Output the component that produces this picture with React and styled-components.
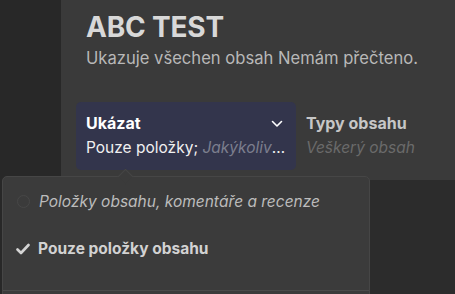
import React from 'react'
import styled, { createGlobalStyle } from 'styled-components'

const Global = createGlobalStyle`
  html, body {
    margin: 0;
    padding: 0;
    background: #2c2c2c;
    font-family: Inter, "Noto Sans", sans-serif;
  }
`;

function App() {
  return (
    <Page>
      <Global />
      <Sidebar />
      <Main>
        <Header>
          <Title>ABC TEST</Title>
          <Subtitle>Ukazuje všechen obsah Nemám přečteno.</Subtitle>
          <Filters>
            <SelectBox>
              <LabelRow>
                <Label>Ukázat</Label>
                <svg width="12" height="8" viewBox="0 0 12 8" fill="none">
                  <path d="M1.5 1.5 6 6l4.5-4.5" stroke="#fff" strokeWidth="1.6" strokeLinecap="round" strokeLinejoin="round" />
                </svg>
              </LabelRow>
              <Value>
                Pouze položky; <Muted>Jakýkoliv obsah</Muted>
              </Value>
            </SelectBox>
            <Filter>
              <Label dim>Typy obsahu</Label>
              <Value><Muted faint>Veškerý obsah</Muted></Value>
            </Filter>
          </Filters>
        </Header>
      </Main>

      <Menu>
        <MenuItem>
          <Radio />
          <ItemText italic>Položky obsahu, komentáře a recenze</ItemText>
        </MenuItem>
        <MenuItem>
          <svg width="14" height="12" viewBox="0 0 14 12">
            <path d="M1.5 6.5 5 10l7.5-8" stroke="#d4d4d4" strokeWidth="2.6" fill="none" strokeLinecap="round" strokeLinejoin="round" />
          </svg>
          <ItemText bold>Pouze položky obsahu</ItemText>
        </MenuItem>
        <Divider />
      </Menu>
    </Page>
  )
}

const Page = styled.div`
  position: relative;
  display: flex;
  width: 455px;
  height: 294px;
  overflow: hidden;
  background: #2c2c2c;
`;

const Sidebar = styled.div`
  width: 61px;
  background: #282828;
`;

const Main = styled.div`
  flex: 1;
  display: flex;
  flex-direction: column;
`;

const Header = styled.div`
  height: 180px;
  box-sizing: border-box;
  background: #3a3a3a;
  padding: 10px 0 0 25px;
`;

const Title = styled.h1`
  margin: 0;
  font-size: 28px;
  font-weight: 700;
  line-height: 34px;
  color: #d8d8d8;
  letter-spacing: -0.2px;
`;

const Subtitle = styled.p`
  margin: 3px 0 0;
  font-size: 16.6px;
  line-height: 22px;
  color: #b8b8b8;
`;

const Filters = styled.div`
  display: flex;
  gap: 10px;
  margin: 33px 0 0 -10px;
`;

const SelectBox = styled.div`
  width: 220px;
  height: 68px;
  flex-shrink: 0;
  box-sizing: border-box;
  padding: 11px 10px 0;
  background: #33354c;
  border-radius: 5px;
`;

const Filter = styled.div`
  flex: 1;
  padding-top: 11px;
  min-width: 0;
`;

const LabelRow = styled.div`
  display: flex;
  align-items: center;
  justify-content: space-between;
  padding-right: 3px;
`;

const Label = styled.div`
  font-size: 16px;
  font-weight: 700;
  line-height: 21px;
  color: ${p => (p.dim ? '#c6c6c6' : '#ffffff')};
`;

const Value = styled.div`
  margin-top: 3px;
  font-size: 15.5px;
  line-height: 21px;
  color: #f0f0f0;
  white-space: nowrap;
  overflow: hidden;
  text-overflow: ellipsis;
`;

const Muted = styled.span`
  font-style: italic;
  color: ${p => (p.faint ? '#6a6a6a' : '#7c7e8e')};
`;

const Menu = styled.div`
  position: absolute;
  left: 2px;
  top: 176px;
  width: 368px;
  height: 130px;
  box-sizing: border-box;
  background: #3b3b3b;
  border: 1px solid #464646;
  border-radius: 5px;
  padding-top: 1px;

  &::before {
    content: '';
    position: absolute;
    left: 117px;
    top: -6px;
    width: 10px;
    height: 10px;
    background: #3b3b3b;
    border-left: 1px solid #464646;
    border-top: 1px solid #464646;
    transform: rotate(45deg);
  }
`;

const MenuItem = styled.div`
  display: flex;
  align-items: center;
  gap: 8px;
  height: 47px;
  padding-left: 13px;
`;

const Radio = styled.span`
  width: 11px;
  height: 11px;
  border: 1.5px solid #474747;
  border-radius: 50%;
  margin: 0 1px;
`;

const ItemText = styled.span`
  font-size: 15.5px;
  color: ${p => (p.bold ? '#d2d2d2' : '#bcbcbc')};
  font-style: ${p => (p.italic ? 'italic' : 'normal')};
  font-weight: ${p => (p.bold ? 700 : 400)};
`;

const Divider = styled.div`
  margin-top: 18px;
  height: 1px;
  background: #4a4a4a;
`;

export default App
